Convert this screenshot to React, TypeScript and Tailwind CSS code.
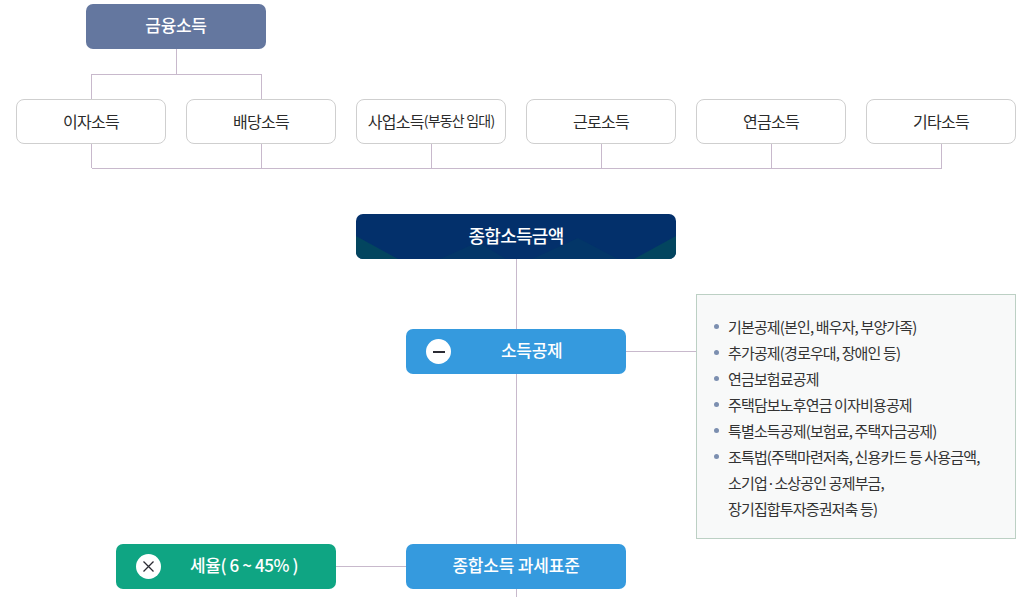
const font = { fontFamily: '"Noto Sans CJK KR", "Noto Sans", sans-serif' }

const sources = ['이자소득', '배당소득', '사업소득', '근로소득', '연금소득', '기타소득']

const deductions = [
  ['기본공제(본인, 배우자, 부양가족)'],
  ['추가공제(경로우대, 장애인 등)'],
  ['연금보험료공제'],
  ['주택담보노후연금 이자비용공제'],
  ['특별소득공제(보험료, 주택자금공제)'],
  ['조특법(주택마련저축, 신용카드 등 사용금액,', '소기업·소상공인 공제부금,', '장기집합투자증권저축 등)'],
]

function Connectors() {
  const drops = [91, 261, 431, 601, 771, 941]
  return (
    <svg className="absolute left-0 top-0" width="1033" height="597" shapeRendering="crispEdges" fill="none" stroke="#c8b9cc">
      <path d="M176.5 49V74.5M91.5 99V74.5H261.5V99" />
      <path d="M91.5 168.5H941.5" />
      {drops.map((x) => (
        <path key={x} d={`M${x + 0.5} 144V168`} />
      ))}
      <path d="M516.5 259V597" />
      <path d="M626 351.5H696" />
      <path d="M336 566.5H406" />
    </svg>
  )
}

export default function App() {
  return (
    <div className="relative h-[597px] w-[1033px] overflow-hidden bg-white px-[16px] pt-[4px]" style={font}>
      <Connectors />

      <div className="relative ml-[70px] flex h-[45px] w-[180px] items-center justify-center rounded-[7px] bg-[#64779f] pb-[3px] text-[17px] font-medium tracking-[-0.3px] text-white">
        금융소득
      </div>

      <div className="relative mt-[50px] flex gap-[20px]">
        {sources.map((name) => (
          <div
            key={name}
            className="flex h-[45px] w-[150px] items-center justify-center rounded-[8px] border border-[#cfcfcf] bg-white pb-[2px] text-[16px] tracking-[-0.7px] text-[#2b2b2b]"
          >
            {name}
            {name === '사업소득' && <span className="text-[14px] tracking-[-0.8px]">(부동산 임대)</span>}
          </div>
        ))}
      </div>

      <div className="relative ml-[340px] mt-[70px] flex h-[45px] w-[320px] items-center justify-center overflow-hidden rounded-[7px] bg-[#03306b] pb-[3px] text-[18px] font-medium tracking-[-0.7px] text-white">
        <svg className="absolute left-0 top-0" width="320" height="45" viewBox="0 0 320 45">
          <path d="M0 22L42 45H0Z" fill="#03455f" />
          <path d="M84 45L122 28L150 45Z" fill="#033668" />
          <path d="M176 45L222 24L262 45Z" fill="#033668" />
          <path d="M278 45L320 22V45Z" fill="#03455f" />
        </svg>
        <span className="relative">종합소득금액</span>
      </div>

      <div className="relative mt-[35px] flex">
        <div className="ml-[390px] mt-[35px] flex h-[45px] w-[220px] items-center rounded-[7px] bg-[#359ade] pl-[20px] text-[17px] font-medium tracking-[-0.3px] text-white">
          <span className="flex h-[25px] w-[25px] items-center justify-center rounded-full bg-white">
            <span className="h-[2px] w-[12px] bg-[#2b2b33]" />
          </span>
          <span className="ml-[50px] -translate-y-[2px]">소득공제</span>
        </div>

        <div className="ml-[70px] h-[245px] w-[320px] border border-[#bcd0c4] bg-[#f8f9f9] pl-[17px] pt-[19px]">
          <ul className="text-[15px] leading-[26px] tracking-[-0.85px] text-[#333]">
            {deductions.map((lines) => (
              <li key={lines[0]} className="relative pl-[14px]">
                <span className="absolute left-0 top-[10px] h-[5px] w-[5px] rounded-full bg-[#7c8fb0]" />
                {lines.map((line) => (
                  <div key={line}>{line}</div>
                ))}
              </li>
            ))}
          </ul>
        </div>
      </div>

      <div className="relative ml-[100px] mt-[5px] flex">
        <div className="flex h-[45px] w-[220px] items-center rounded-[7px] bg-[#0fa583] pl-[20px] text-[17px] font-medium tracking-[-0.4px] text-white">
          <span className="flex h-[25px] w-[25px] items-center justify-center rounded-full bg-white">
            <svg width="13" height="13" viewBox="0 0 13 13" fill="none" stroke="#2b2b33" strokeWidth="1.3">
              <path d="M1.5 1.5L11.5 11.5M11.5 1.5L1.5 11.5" />
            </svg>
          </span>
          <span className="ml-[29px] -translate-y-[2px]">세율( 6 ~ 45% )</span>
        </div>
        <div className="ml-[70px] flex h-[45px] w-[220px] items-center justify-center rounded-[7px] bg-[#359ade] pb-[3px] text-[17px] font-medium tracking-[-0.2px] text-white">
          종합소득 과세표준
        </div>
      </div>
    </div>
  )
}
